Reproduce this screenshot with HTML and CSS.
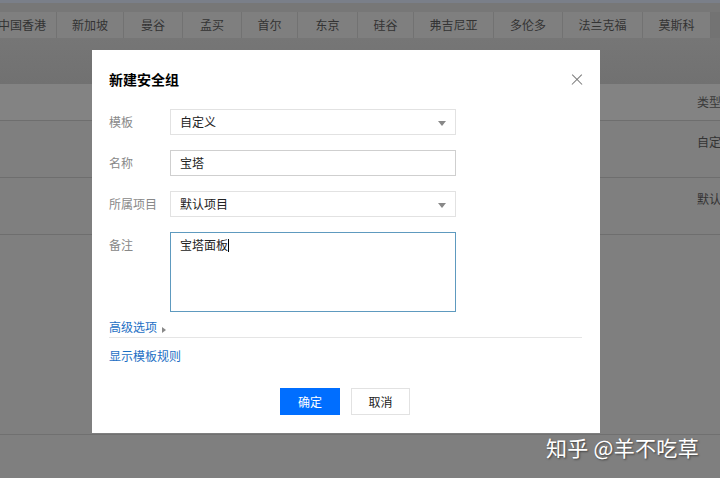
FILE: index.html
```html
<!DOCTYPE html>
<html>
	<head>
		<meta charset="UTF-8">
		<title>新建安全组</title>
		<link rel="stylesheet" href="styles.css">
	</head>
	<body>
		<div id="page">
			<div class="topline"></div>
			<ul class="regions">
				<li>中国香港</li>
				<li>新加坡</li>
				<li>曼谷</li>
				<li>孟买</li>
				<li>首尔</li>
				<li>东京</li>
				<li>硅谷</li>
				<li>弗吉尼亚</li>
				<li>多伦多</li>
				<li>法兰克福</li>
				<li>莫斯科</li>
			</ul>
			<div class="band"></div>
			<div class="table">
				<div class="row head"><span>类型</span></div>
				<div class="row"><span>自定</span></div>
				<div class="row"><span>默认</span></div>
				<div class="empty"></div>
			</div>
		</div>

		<div id="dialog">
			<div class="title">新建安全组</div>
			<span class="close"></span>
			<div class="form">
				<div class="field">
					<label>模板</label>
					<div class="input select">自定义<i class="caret"></i></div>
				</div>
				<div class="field">
					<label>名称</label>
					<div class="input text">宝塔</div>
				</div>
				<div class="field">
					<label>所属项目</label>
					<div class="input select">默认项目<i class="caret"></i></div>
				</div>
				<div class="field">
					<label>备注</label>
					<div class="input area">宝塔面板<span class="cursor"></span></div>
				</div>
			</div>
			<div class="more"><a>高级选项</a><i class="arrow"></i></div>
			<div class="rules"><a>显示模板规则</a></div>
			<div class="btns">
				<button class="ok">确定</button>
				<button class="cancel">取消</button>
			</div>
		</div>

		<div class="mark">知乎 @羊不吃草</div>
	</body>
</html>
```

FILE: styles.css
```css
body {
	margin: 0;
	width: 720px;
	height: 478px;
	overflow: hidden;
	position: relative;
	background: #7a7a7a;
	font-family: "Noto Sans CJK SC", "Noto Sans", sans-serif;
	font-size: 12px;
}
ul {
	margin: 0;
	padding: 0;
	list-style: none;
}
#page {
	height: 478px;
	display: flex;
	flex-direction: column;
}
.topline {
	height: 3px;
	background: #7a7f89;
	border-bottom: 9px solid #777;
}
.regions {
	display: flex;
	height: 26px;
	background: #737373;
}
.regions li {
	width: 59px;
	line-height: 26px;
	text-align: center;
	color: #333;
	background: #7f7f7f;
	border-right: 1px solid #727272;
	box-sizing: border-box;
}
.regions li:nth-child(1) { width: 57px; text-indent: -12px; }
.regions li:nth-child(2) { width: 67px; }
.regions li:nth-child(5) { width: 56px; }
.regions li:nth-child(6) { width: 60px; }
.regions li:nth-child(7) { width: 56px; }
.regions li:nth-child(8) { width: 80px; }
.regions li:nth-child(9) { width: 69px; }
.regions li:nth-child(10) { width: 80px; }
.regions li:nth-child(11) { width: 68px; }
.band {
	height: 46px;
	background: linear-gradient(#767676, #717171);
}
.table {
	flex: 1;
	display: flex;
	flex-direction: column;
	background: #7f7f7f;
}
.row {
	height: 57px;
	border-bottom: 1px solid #6e6e6e;
	display: flex;
	justify-content: flex-end;
	padding-top: 12px;
	box-sizing: border-box;
	color: #333;
}
.row.head {
	height: 37px;
	padding-top: 9px;
	background: #838383;
	color: #3a3a3a;
}
.row span {
	width: 23px;
	overflow: hidden;
	white-space: nowrap;
}
.empty {
	height: 199px;
	border-bottom: 1px solid #707070;
}

#dialog {
	position: absolute;
	left: 92px;
	top: 50px;
	width: 508px;
	height: 383px;
	box-sizing: border-box;
	padding: 19px 18px 0 17px;
	background: #fff;
}
.title {
	font-size: 14px;
	font-weight: bold;
	line-height: 20px;
	color: #000;
	margin-bottom: 20px;
}
.close {
	position: absolute;
	right: 18px;
	top: 25px;
	width: 10px;
	height: 10px;
}
.close::before,
.close::after {
	content: "";
	position: absolute;
	left: -2px;
	top: 4px;
	width: 14px;
	height: 1.4px;
	background: #777;
	transform: rotate(45deg);
}
.close::after {
	transform: rotate(-45deg);
}
.form {
	display: flex;
	flex-direction: column;
	gap: 15px;
}
.field {
	display: flex;
}
.field label {
	width: 61px;
	line-height: 26px;
	color: #888;
}
.input {
	position: relative;
	width: 286px;
	height: 26px;
	box-sizing: border-box;
	padding-left: 9px;
	line-height: 24px;
	color: #222;
	border: 1px solid #e2e2e2;
}
.input.text {
	border-color: #cfcfcf;
}
.input.area {
	height: 80px;
	line-height: 22px;
	padding-top: 1px;
	border-color: #5e9abf;
}
.cursor {
	display: inline-block;
	width: 1px;
	height: 13px;
	background: #000;
	vertical-align: -2px;
}
.caret {
	position: absolute;
	right: 9px;
	top: 11px;
	border-left: 4px solid transparent;
	border-right: 4px solid transparent;
	border-top: 5px solid #888;
}
.more {
	margin-top: 6px;
	line-height: 18px;
	padding-bottom: 1px;
	border-bottom: 1px solid #e5e5e5;
}
a {
	color: #1d6fc4;
}
.arrow {
	display: inline-block;
	margin-left: 5px;
	border-top: 3.5px solid transparent;
	border-bottom: 3.5px solid transparent;
	border-left: 4px solid #888;
	vertical-align: -1px;
}
.rules {
	margin-top: 9px;
	line-height: 18px;
}
.btns {
	margin-top: 23px;
	display: flex;
	justify-content: center;
	gap: 11px;
	padding-right: 1px;
}
.btns button {
	width: 60px;
	height: 27px;
	font-family: inherit;
	font-size: 12px;
	border: 1px solid #e2e2e2;
	background: #fff;
	color: #222;
	padding: 0;
}
.btns .ok {
	background: #006eff;
	border-color: #006eff;
	color: #fff;
}
.btns .cancel {
	width: 59px;
}
.mark {
	position: absolute;
	left: 546px;
	top: 432px;
	font-size: 21px;
	line-height: 30px;
	color: #fff;
	text-shadow: 1px 1px 2px rgba(0, 0, 0, 0.5);
	letter-spacing: 0.3px;
}
```
